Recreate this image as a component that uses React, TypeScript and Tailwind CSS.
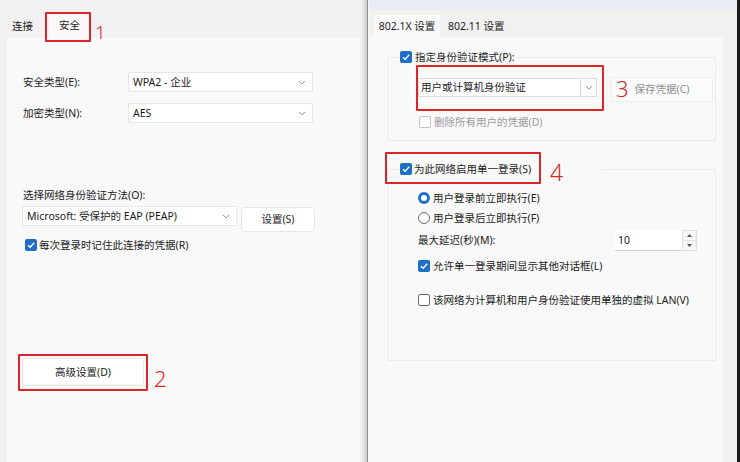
import React from "react";

const Check = ({ checked = true, disabled = false }: { checked?: boolean; disabled?: boolean }) =>
  checked ? (
    <span className="w-[12px] h-[12px] rounded-[2px] bg-[#1f6fc6] flex items-center justify-center shrink-0">
      <svg width="10" height="10" viewBox="0 0 10 10">
        <path d="M2 5.2 L4.2 7.3 L8.2 2.8" stroke="white" strokeWidth="1.4" fill="none" />
      </svg>
    </span>
  ) : (
    <span
      className={
        "w-[12px] h-[12px] rounded-[2px] border bg-white shrink-0 " +
        (disabled ? "border-[#c4c4c4]" : "border-[#6a6a6a]")
      }
    />
  );

const Radio = ({ checked }: { checked: boolean }) =>
  checked ? (
    <span className="w-[12px] h-[12px] rounded-full border-[3.5px] border-[#1f6fc6] bg-white shrink-0" />
  ) : (
    <span className="w-[12px] h-[12px] rounded-full border border-[#6a6a6a] bg-white shrink-0" />
  );

const Chevron = () => (
  <svg width="8" height="5" viewBox="0 0 8 5">
    <path d="M1 1 L4 4 L7 1" stroke="#9a9a9a" strokeWidth="1" fill="none" />
  </svg>
);

const Select = ({ text, w }: { text: string; w: string }) => (
  <div className={"h-[20px] bg-white border border-[#e6e6e6] rounded-[2px] flex items-center justify-between pl-[4px] pr-[6px] " + w}>
    <span>{text}</span>
    <Chevron />
  </div>
);

const Num = ({ n, cls }: { n: string; cls: string }) => (
  <span className={"absolute text-[#d8262b] font-light leading-none " + cls}>{n}</span>
);

const RedBox = ({ cls }: { cls: string }) => (
  <div className={"absolute border-2 border-[#d8262b] rounded-[1px] " + cls} />
);

export default function App() {
  return (
    <div className="relative w-[740px] h-[462px] flex overflow-hidden text-[10.5px] leading-[13px] text-[#1b1b1b] font-['Noto_Sans','Noto_Sans_CJK_SC',sans-serif]">
      {/* Left panel */}
      <div className="w-[362px] h-full bg-[#f1f1f1] flex flex-col">
        <div className="h-[38px] flex items-end pl-[12px]">
          <span className="pb-[5px]">连接</span>
          <div className="ml-[16px] w-[41px] h-[25px] bg-[#f9f9f9] flex items-center justify-center">安全</div>
        </div>
        <div className="flex-1 bg-[#f9f9f9] ml-[7px] mr-[2px] pl-[16px] pt-[34px] flex flex-col">
          <div className="flex items-center h-[20px]">
            <span className="w-[105px]">安全类型(E):</span>
            <Select text="WPA2 - 企业" w="w-[185px]" />
          </div>
          <div className="flex items-center h-[20px] mt-[11px]">
            <span className="w-[105px]">加密类型(N):</span>
            <Select text="AES" w="w-[185px]" />
          </div>
          <div className="mt-[66px]">选择网络身份验证方法(O):</div>
          <div className="flex items-start mt-[4px] -ml-[1px]">
            <Select text="Microsoft: 受保护的 EAP (PEAP)" w="w-[215px]" />
            <button className="ml-[4px] mt-[1px] w-[74px] h-[25px] bg-white border border-[#e8e8e8] rounded-[3px] flex items-center justify-center">
              设置(S)
            </button>
          </div>
          <div className="flex items-center gap-[2px] mt-[7px] pl-[2px] h-[12px]">
            <Check />
            <span>每次登录时记住此连接的凭据(R)</span>
          </div>
          <button className="mt-[107px] -ml-[1px] w-[122px] h-[28px] bg-white border border-[#e8e8e8] rounded-[2px] flex items-center justify-center">
            高级设置(D)
          </button>
        </div>
      </div>

      {/* Divider */}
      <div className="w-[5px] h-full bg-gradient-to-r from-[#ededed] to-[#c9c9c9]" />
      <div className="w-[1px] h-full bg-[#8e8e8e]" />
      <div className="w-[1px] h-full bg-[#f7f7f7]" />

      {/* Right panel */}
      <div className="w-[368px] h-full bg-[#f1f1f1] flex flex-col">
        <div className="h-[10px] bg-[#e8eef4]" />
        <div className="h-[27px] flex items-end pl-[5px]">
          <div className="w-[66px] h-[22px] bg-[#fafafa] flex items-center justify-center">802.1X 设置</div>
          <span className="ml-[8px] pb-[4px]">802.11 设置</span>
        </div>
        <div className="flex-1 flex">
          <div className="w-[354px] bg-[#f9f9f9] pl-[18px] flex flex-col">
            {/* Group 1 */}
            <fieldset className="mt-[14px] w-[329px] border border-[#ebebeb] pl-[12px] pb-[12px]">
              <legend className="flex items-center gap-[3px] h-[12px] pr-[2px]">
                <Check />
                <span>指定身份验证模式(P):</span>
              </legend>
              <div className="flex items-start mt-[15px] ml-[18px]">
                <div className="w-[179px] h-[19px] flex border border-[#dcdcdc] bg-white">
                  <div className="flex-1 flex items-center pl-[2px] border-r border-[#dcdcdc]">用户或计算机身份验证</div>
                  <div className="w-[15px] flex items-center justify-center bg-[#fbfbfb]">
                    <Chevron />
                  </div>
                </div>
                <button className="ml-[14px] -mt-[1px] w-[102px] h-[25px] bg-[#fbfbfb] border border-[#eeeeee] rounded-[2px] flex items-center justify-center text-[#8f8f8f]">
                  保存凭据(C)
                </button>
              </div>
              <div className="flex items-center gap-[3px] mt-[14px] ml-[19px] h-[12px] text-[#9b9b9b]">
                <Check checked={false} disabled />
                <span>删除所有用户的凭据(D)</span>
              </div>
            </fieldset>

            {/* Group 2 */}
            <fieldset className="mt-[22px] w-[329px] border border-[#ebebeb] pl-[12px] pb-[54px]">
              <legend className="flex items-center gap-[2px] h-[12px] w-[202px]">
                <Check />
                <span>为此网络启用单一登录(S)</span>
              </legend>
              <div className="ml-[18px] flex flex-col">
                <div className="flex items-center gap-[3px] mt-[17px] h-[12px]">
                  <Radio checked />
                  <span>用户登录前立即执行(E)</span>
                </div>
                <div className="flex items-center gap-[3px] mt-[8px] h-[12px]">
                  <Radio checked={false} />
                  <span>用户登录后立即执行(F)</span>
                </div>
                <div className="flex items-center mt-[6px] h-[21px]">
                  <span className="w-[197px]">最大延迟(秒)(M):</span>
                  <div className="flex h-[21px]">
                    <div className="w-[67px] bg-white border-b border-[#cfcfcf] flex items-center pl-[3px]">10</div>
                    <div className="w-[15px] flex flex-col border border-[#e0e0e0] bg-[#f7f7f7]">
                      <div className="flex-1 flex items-center justify-center border-b border-[#e0e0e0]">
                        <svg width="5" height="3" viewBox="0 0 5 3"><path d="M0 3 L2.5 0 L5 3Z" fill="#555" /></svg>
                      </div>
                      <div className="flex-1 flex items-center justify-center">
                        <svg width="5" height="3" viewBox="0 0 5 3"><path d="M0 0 L2.5 3 L5 0Z" fill="#555" /></svg>
                      </div>
                    </div>
                  </div>
                </div>
                <div className="flex items-center gap-[3px] mt-[9px] h-[12px]">
                  <Check />
                  <span>允许单一登录期间显示其他对话框(L)</span>
                </div>
                <div className="flex items-center gap-[3px] mt-[22px] h-[12px]">
                  <Check checked={false} />
                  <span>该网络为计算机和用户身份验证使用单独的虚拟 LAN(V)</span>
                </div>
              </div>
            </fieldset>
          </div>
          <div className="flex-1 bg-[#f1f1f1]" />
        </div>
      </div>
      <div className="w-[3px] h-full bg-[#1a1a1a]" />

      {/* Annotations */}
      <RedBox cls="left-[45px] top-[12px] w-[46px] h-[30px]" />
      <Num n="1" cls="left-[95px] top-[23px] text-[19px]" />
      <RedBox cls="left-[18px] top-[354px] w-[130px] h-[37px]" />
      <Num n="2" cls="left-[154px] top-[367px] text-[22px]" />
      <RedBox cls="left-[416px] top-[65px] w-[188px] h-[46px]" />
      <Num n="3" cls="left-[616px] top-[77px] text-[22px]" />
      <RedBox cls="left-[385px] top-[152px] w-[156px] h-[32px]" />
      <Num n="4" cls="left-[550px] top-[161px] text-[23px]" />
    </div>
  );
}
